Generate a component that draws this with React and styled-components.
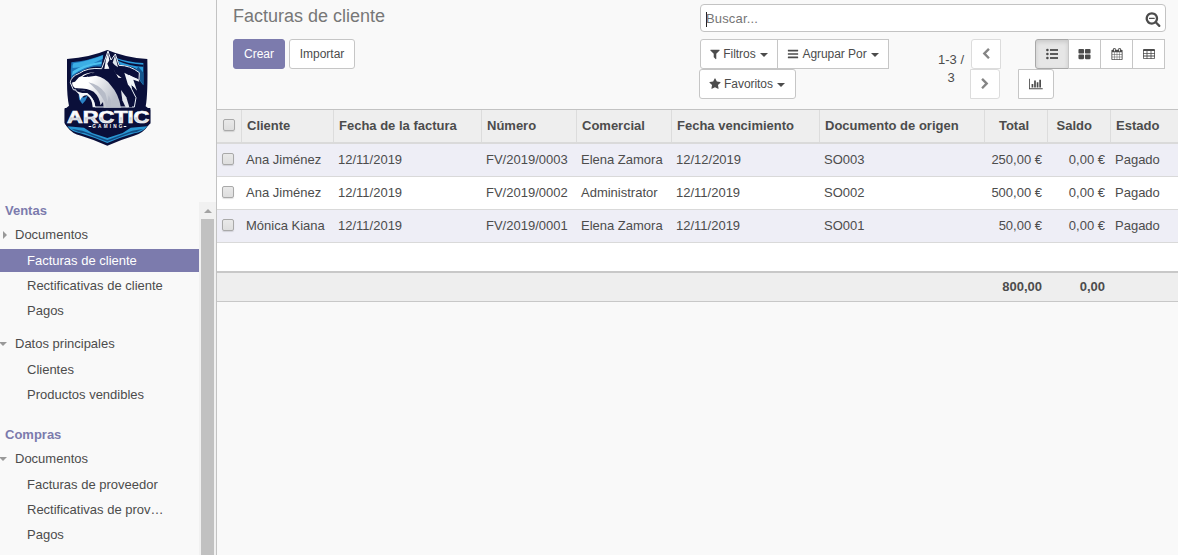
import React from "react";
import styled, { createGlobalStyle, css } from "styled-components";

const Global = createGlobalStyle`
  * { box-sizing: border-box; }
  body {
    margin: 0;
    overflow: hidden;
    background: #f9f9f9;
    color: #4c4c4c;
    font: 13px/18px "Liberation Sans", Arial, sans-serif;
  }
`;

const Page = styled.div`
  display: flex;
  width: 1178px;
  height: 555px;
`;

/* ---------- sidebar ---------- */
const Sidebar = styled.aside`
  display: flex;
  flex-direction: column;
  width: 217px;
  flex: none;
  border-right: 1px solid #c3c3c3;
`;
const LogoArea = styled.div`
  height: 202px;
  flex: none;
  padding: 48px 0 0 62px;
`;
const MenuArea = styled.div`
  display: flex;
  flex: 1;
  min-height: 0;
  overflow: hidden;
`;
const Menu = styled.nav`
  width: 199px;
  flex: none;
`;
const Section = styled.div`
  height: 17px;
  padding-left: 5px;
  margin-top: ${(p) => p.$top}px;
  line-height: 17px;
  font-weight: bold;
  color: #7c7bad;
`;
const Group = styled.div`
  position: relative;
  height: 19px;
  line-height: 19px;
  padding-left: 15px;
  margin: ${(p) => p.$top}px 0 5px;
`;
const Arrow = styled.i`
  position: absolute;
  ${(p) =>
    p.$open
      ? css`
          left: -1px;
          top: 8px;
          border: 4px solid transparent;
          border-top-color: #999;
          border-bottom: 0;
        `
      : css`
          left: 3px;
          top: 6px;
          border: 4px solid transparent;
          border-left-color: #999;
          border-right: 0;
        `}
`;
const Item = styled.div`
  height: 23px;
  margin-bottom: 2px;
  padding-left: 27px;
  line-height: 23px;
  white-space: nowrap;
  ${(p) => p.$active && css`background: #7c7bad; color: #fff;`}
`;
const Scrollbar = styled.div`
  display: flex;
  flex-direction: column;
  align-items: center;
  width: 17px;
  background: #f1f1f1;
`;
const ScrollUp = styled.i`
  margin: 7px 0 6px;
  border: 4px solid transparent;
  border-bottom-color: #a3a3a3;
  border-top: 0;
`;
const Thumb = styled.div`
  width: 13px;
  flex: 1;
  background: #c1c1c1;
`;

/* ---------- control panel ---------- */
const Main = styled.main`
  flex: 1;
  min-width: 0;
`;
const Panel = styled.header`
  display: flex;
  height: 110px;
  border-bottom: 1px solid #c3c3c3;
`;
const PanelLeft = styled.div`
  width: 482px;
  padding: 4px 0 0 16px;
`;
const Title = styled.h1`
  height: 24px;
  margin: 0 0 11px;
  font-size: 18px;
  line-height: 24px;
  font-weight: normal;
  color: #777;
`;
const PanelRight = styled.div`
  width: 479px;
  padding: 4px 12px 0 0;
`;
const Search = styled.div`
  display: flex;
  align-items: center;
  height: 28px;
  margin: 0 0 7px 1px;
  padding: 1px 4px 0 5px;
  border: 1px solid #c3c3c3;
  border-radius: 4px;
  background: #fff;
`;
const Cursor = styled.i`
  width: 1px;
  height: 15px;
  margin-top: 1px;
  background: #222;
`;
const Placeholder = styled.span`
  flex: 1;
  margin-left: -1px;
  letter-spacing: 0.15px;
  color: #757575;
`;
const Tools = styled.div`
  display: flex;
`;
const Wrap = styled.div`
  width: ${(p) => p.$w}px;
  margin-left: ${(p) => p.$left || 0}px;
`;
const Line = styled.div`
  display: flex;
  height: 30px;
  gap: ${(p) => p.$gap || 0}px;
  padding-left: ${(p) => p.$left || 0}px;
`;
const Button = styled.button`
  display: flex;
  align-items: center;
  justify-content: center;
  flex: none;
  width: ${(p) => p.$w}px;
  height: 30px;
  margin: 0 0 0 ${(p) => (p.$join ? -1 : 0)}px;
  padding: 0;
  border: 1px solid ${(p) => (p.$soft ? "#dcdcdc" : "#c6c6c6")};
  border-radius: ${(p) => p.$r || "3px"};
  background: #fff;
  color: ${(p) => (p.$soft ? "#858585" : "#4c4c4c")};
  font: 12px "Liberation Sans", Arial, sans-serif;
  ${(p) => p.$primary && css`background: #7c7bad; border-color: #7c7bad; color: #fff;`}
  ${(p) => p.$pressed && css`
    background: #e6e6e6;
    border-color: #a8a8a8;
    box-shadow: inset 0 2px 4px rgba(0, 0, 0, 0.13);
  `}
`;
const Label = styled.span`
  margin: 0 4px 0 ${(p) => p.$gap || 3}px;
  letter-spacing: -0.05px;
`;
const Caret = styled.i`
  margin: 2px ${(p) => p.$right || 0}px 0 0;
  border: 4px solid transparent;
  border-top-color: #4c4c4c;
  border-bottom: 0;
`;
const PagerText = styled.div`
  width: 28px;
  margin: 12px 0 0 47px;
  text-align: center;
  line-height: 18px;
`;

/* ---------- list ---------- */
const Row = styled.div`
  display: grid;
  grid-template-columns: 25px 92px 148px 95px 95px 148px 165px 63px 63px 67px;
  height: 33px;
  line-height: 32px;
  background: ${(p) => (p.$odd ? "#eeeef6" : "#fff")};
  border-bottom: 1px solid #d9d9d9;
`;
const HeadRow = styled(Row)`
  height: 34px;
  line-height: 31px;
  background: #eee;
  border-bottom: 2px solid #dadada;
  font-weight: bold;
`;
const FootRow = styled(Row)`
  height: 31px;
  line-height: 27px;
  background: #eee;
  border-top: 2px solid #c8c8c8;
  border-bottom: 1px solid #c8c8c8;
  font-weight: bold;
`;
const Blank = styled.div`
  height: 28px;
  background: #fff;
`;
const Cell = styled.div`
  padding: 0 6px 0 4px;
  white-space: nowrap;
  text-align: ${(p) => (p.$right ? "right" : "left")};
`;
const HeadCell = styled(Cell)`
  padding: 0 ${(p) => (p.$right ? 18 : 0)}px 0 5px;
  border-right: 1px solid #dcdcdc;
  &:last-child { border-right: 0; }
`;
const Check = styled.span`
  display: block;
  width: 12px;
  height: 12px;
  margin: ${(p) => (p.$head ? "9px 0 0 1px" : "9px 0 0 1px")};
  border: 1px solid #a9a9a9;
  border-radius: 2px;
  background: linear-gradient(#e9e9e9, #dedede);
  box-shadow: 0 1px 1px rgba(0, 0, 0, 0.12);
`;

/* ---------- icons ---------- */
const Glyph = styled.svg`
  display: block;
  flex: none;
  fill: currentColor;
`;
const PATHS = {
  filter:
    "M1595 295q17 41-14 70l-493 493v742q0 42-39 59-13 5-25 5-27 0-45-19l-256-256q-19-19-19-45v-486l-493-493q-31-29-14-70 17-39 59-39h1280q42 0 59 39z",
  bars: "M1664 1344v128q0 26-19 45t-45 19h-1408q-26 0-45-19t-19-45v-128q0-26 19-45t45-19h1408q26 0 45 19t19 45zm0-512v128q0 26-19 45t-45 19h-1408q-26 0-45-19t-19-45v-128q0-26 19-45t45-19h1408q26 0 45 19t19 45zm0-512v128q0 26-19 45t-45 19h-1408q-26 0-45-19t-19-45v-128q0-26 19-45t45-19h1408q26 0 45 19t19 45z",
  star: "M1728 647q0 22-26 48l-363 354 86 500q1 7 1 20 0 21-10.5 35.5t-30.5 14.5q-19 0-40-12l-449-236-449 236q-22 12-40 12-21 0-31.5-14.5t-10.5-35.5q0-6 2-20l86-500-364-354q-25-27-25-48 0-37 56-46l502-73 225-455q19-41 49-41t49 41l225 455 502 73q56 9 56 46z",
  searchMinus:
    "M1088 800v64q0 13-9.5 22.5t-22.5 9.5h-576q-13 0-22.5-9.5t-9.5-22.5v-64q0-13 9.5-22.5t22.5-9.5h576q13 0 22.5 9.5t9.5 22.5zm128 32q0-185-131.5-316.5t-316.5-131.5-316.5 131.5-131.5 316.5 131.5 316.5 316.5 131.5 316.5-131.5 131.5-316.5zm512 832q0 53-37.5 90.5t-90.5 37.5q-54 0-90-38l-343-342q-179 124-399 124-143 0-273.5-55.5t-225-150-150-225-55.5-273.5 55.5-273.5 150-225 225-150 273.5-55.5 273.5 55.5 225 150 150 225 55.5 273.5q0 220-124 399l343 343q37 37 37 90z",
  calendar:
    "M192 1664h288v-288h-288v288zm352 0h320v-288h-320v288zm-352-352h288v-320h-288v320zm352 0h320v-320h-320v320zm-352-384h288v-288h-288v288zm736 736h320v-288h-320v288zm-384-736h320v-288h-320v288zm768 736h288v-288h-288v288zm-384-352h320v-320h-320v320zm-352-864v-288q0-13-9.5-22.5t-22.5-9.5h-64q-13 0-22.5 9.5t-9.5 22.5v288q0 13 9.5 22.5t22.5 9.5h64q13 0 22.5-9.5t9.5-22.5zm736 864h288v-320h-288v320zm-384-384h320v-288h-320v288zm384 0h288v-288h-288v288zm32-480v-288q0-13-9.5-22.5t-22.5-9.5h-64q-13 0-22.5 9.5t-9.5 22.5v288q0 13 9.5 22.5t22.5 9.5h64q13 0 22.5-9.5t9.5-22.5zm384-64v1280q0 52-38 90t-90 38h-1408q-52 0-90-38t-38-90v-1280q0-52 38-90t90-38h128v-96q0-66 47-113t113-47h64q66 0 113 47t47 113v96h384v-96q0-66 47-113t113-47h64q66 0 113 47t47 113v96h128q52 0 90 38t38 90z",
  chart:
    "M640 896v512h-256v-512h256zm384-512v1024h-256v-1024h256zm1024 1152v128h-2048v-1536h128v1408h1920zm-640-896v768h-256v-768h256zm384-384v1152h-256v-1152h256z",
  left: "M1427 301l-531 531 531 531q19 19 19 45t-19 45l-166 166q-19 19-45 19t-45-19l-742-742q-19-19-19-45t19-45l742-742q19-19 45-19t45 19l166 166q19 19 19 45t-19 45z",
  large:
    "M832 1024v384q0 52-38 90t-90 38h-512q-52 0-90-38t-38-90v-384q0-52 38-90t90-38h512q52 0 90 38t38 90zm0-768v384q0 52-38 90t-90 38h-512q-52 0-90-38t-38-90v-384q0-52 38-90t90-38h512q52 0 90 38t38 90zm896 768v384q0 52-38 90t-90 38h-512q-52 0-90-38t-38-90v-384q0-52 38-90t90-38h512q52 0 90 38t38 90zm0-768v384q0 52-38 90t-90 38h-512q-52 0-90-38t-38-90v-384q0-52 38-90t90-38h512q52 0 90 38t38 90z",
};
const Icon = ({ name, size = 12, wide, flip }) => (
  <Glyph
    width={wide ? (size * 8) / 7 : size}
    height={size}
    viewBox={wide ? "0 0 2048 1792" : "0 0 1792 1792"}
    transform={flip ? "scale(-1 1)" : undefined}
  >
    <path d={PATHS[name]} />
  </Glyph>
);
const ListIcon = () => (
  <Glyph width="12" height="12" viewBox="0 0 12 12">
    {[2, 6, 10].map((y) => (
      <g key={y}>
        <circle cx="1.4" cy={y} r="1.3" />
        <rect x="4" y={y - 0.9} width="8" height="1.8" />
      </g>
    ))}
  </Glyph>
);
const TableIcon = () => (
  <Glyph width="12" height="12" viewBox="0 0 12 12">
    <path
      fillRule="evenodd"
      d="M1 1h10q1 0 1 1v8q0 1-1 1H1q-1 0-1-1V2Q0 1 1 1zM.8 3v1.9h2.8V3zm3.6 0v1.9h3.2V3zm4 0v1.9h2.8V3zM.8 5.7v1.9h2.8V5.7zm3.6 0v1.9h3.2V5.7zm4 0v1.9h2.8V5.7zM.8 8.4v1.8h2.8V8.4zm3.6 0v1.8h3.2V8.4zm4 0v1.8h2.8V8.4z"
    />
  </Glyph>
);

const LogoText = styled.text`
  font-family: "Liberation Sans", Arial, sans-serif;
  font-weight: bold;
  font-size: ${(p) => p.$size}px;
`;
const Logo = () => (
  <svg width="92" height="100" viewBox="21 9 276 300">
    <defs>
      <linearGradient id="metal" x1="0" y1="0" x2="0" y2="1">
        <stop offset="0.45" stopColor="#fff" />
        <stop offset="0.55" stopColor="#c4c8d0" />
        <stop offset="1" stopColor="#fff" />
      </linearGradient>
      <linearGradient id="fur" x1="0" y1="0" x2="1" y2="0.4">
        <stop offset="0.4" stopColor="#fff" />
        <stop offset="1" stopColor="#b9bec9" />
      </linearGradient>
    </defs>
    <path d="M157 15Q105 37 36 42V110Q36 155 42 182L29 193V235L36 245Q52 267 78 272 118 284 157 302 197 284 237 272 265 264 279 242L286 233V194L272 184Q279 150 277 42 211 38 157 15Z" fill="#0a0f3a" />
    {/* sky */}
    <path d="M145 29Q100 47 49 52 46 76 48 101 60 84 82 78 106 61 139 65Z" fill="#1d74b8" />
    <path d="M144 31Q101 48 55 55 52 62 53 69 95 67 143 41Z" fill="#3caee4" />
    <path d="M53 79Q82 58 140 50L139 57Q90 62 51 91Z" fill="#4cc0ee" />
    <path d="M182 38Q218 51 265 54L265 121 255 107 256 82Q245 67 213 62L195 59Z" fill="#2a9bdb" />
    <path d="M190 48Q224 64 265 65V59Q219 57 184 42Z" fill="#0a0f3a" />
    <path d="M215 63L222 76 233 66 242 75 250 65 266 84V121L255 105 253 83Z" fill="#15568f" />
    <path d="M71 147L86 158 99 151 91 167 82 177 72 163Z" fill="#2b82c5" />
    {/* head outline */}
    <path d="M46 113Q48 94 73 85 97 67 140 71L148 50 159 18 168 45 181 27 192 61Q225 61 253 83L252 106Q236 100 222 91L236 124 220 113 243 158 238 186H120Q115 151 88 138L55 134Z" fill="#0a0f3a" stroke="#e9f1f8" strokeWidth="3" />
    {/* muzzle, face and neck */}
    <path d="M51 113Q55 102 79 94 96 81 119 83 106 84 97 96L123 92Q151 98 166 119 191 146 198 188H146L144 171 136 181Q135 157 116 140 97 129 60 130L53 122Z" fill="url(#fur)" />
    <path d="M48 108Q56 98 76 90L69 100 60 110 48 113Z" fill="#0a0f3a" />
    <path d="M82 96Q96 85 117 82L107 91 94 96Z" fill="#0a0f3a" />
    <path d="M100 112Q132 118 151 145L158 171 161 151 169 168 167 187H154L149 170Q129 135 100 112Z" fill="#b7bcc8" />
    <path d="M61 130Q80 139 101 136 131 151 133 184 109 151 87 146L70 143Z" fill="#0a0f3a" />
    <path d="M58 134Q75 146 97 144 118 159 121 187H113Q111 160 96 151 81 151 76 166L72 148Z" fill="#f4f7fa" />
    {/* ears */}
    <path d="M148 72L153 43 159 25 163 46 157 56 163 71Z" fill="#f5f7fa" />
    <path d="M173 53L180 31 189 67 179 60Z" fill="#dfe5ec" />
    <path d="M173 68L183 86 200 99 190 98Z" fill="#fff" />
    {/* back fur */}
    <path d="M203 70Q229 72 247 87L248 95 230 85 209 80Z" fill="#0a0f3a" />
    <path d="M208 83L222 91 249 102 253 110 235 104 246 137 229 118 231 132 219 119Z" fill="#f1f5f9" />
    <path d="M198 112L215 124 239 158 232 154 231 187H219L215 159Z" fill="#0a0f3a" />
    <path d="M198 135L214 157 223 187H212L202 166Z" fill="#e1e5eb" />
    {/* banner and lower rim */}
    <path d="M29 189H286V235L278 243H35L29 234Z" fill="#0a0f3a" />
    <path d="M37 244L87 248 111 264 157 279 203 264 227 248 277 244Q263 262 238 265 197 277 157 294 116 277 76 265 50 261 37 244Z" fill="#2996d3" />
    <path d="M49 251Q69 263 88 264L157 290 226 264Q246 263 266 251L232 257 157 285 82 257Z" fill="#134b82" />
    <LogoText x="36" y="233" $size={48} textLength="247" lengthAdjust="spacingAndGlyphs" fill="url(#metal)" stroke="#f5f7fa" strokeWidth="2">ARCTIC</LogoText>
    <LogoText x="112" y="250" $size={14} textLength="90" lengthAdjust="spacing" fill="#fff">GAMING</LogoText>
    <path d="M101 243h8v3h-8zM206 243h8v3h-8z" fill="#fff" />
  </svg>
);

const HEAD = ["Cliente", "Fecha de la factura", "Número", "Comercial", "Fecha vencimiento", "Documento de origen", "Total", "Saldo", "Estado"];
const ROWS = [
  ["Ana Jiménez", "12/11/2019", "FV/2019/0003", "Elena Zamora", "12/12/2019", "SO003", "250,00 €", "0,00 €", "Pagado"],
  ["Ana Jiménez", "12/11/2019", "FV/2019/0002", "Administrator", "12/11/2019", "SO002", "500,00 €", "0,00 €", "Pagado"],
  ["Mónica Kiana", "12/11/2019", "FV/2019/0001", "Elena Zamora", "12/11/2019", "SO001", "50,00 €", "0,00 €", "Pagado"],
];
const isAmount = (i) => i === 6 || i === 7;

export default function App() {
  return (
    <Page>
      <Global />
      <Sidebar>
        <LogoArea><Logo /></LogoArea>
        <MenuArea>
          <Menu>
            <Section $top={0}>Ventas</Section>
            <Group $top={6}><Arrow />Documentos</Group>
            <Item $active>Facturas de cliente</Item>
            <Item>Rectificativas de cliente</Item>
            <Item>Pagos</Item>
            <Group $top={12}><Arrow $open />Datos principales</Group>
            <Item>Clientes</Item>
            <Item>Productos vendibles</Item>
            <Section $top={20}>Compras</Section>
            <Group $top={6}><Arrow $open />Documentos</Group>
            <Item>Facturas de proveedor</Item>
            <Item>Rectificativas de prov…</Item>
            <Item>Pagos</Item>
          </Menu>
          <Scrollbar><ScrollUp /><Thumb /></Scrollbar>
        </MenuArea>
      </Sidebar>
      <Main>
        <Panel>
          <PanelLeft>
            <Title>Facturas de cliente</Title>
            <Line $gap={4}>
              <Button $w={52} $primary>Crear</Button>
              <Button $w={66}>Importar</Button>
            </Line>
          </PanelLeft>
          <PanelRight>
            <Search>
              <Cursor />
              <Placeholder>Buscar...</Placeholder>
              <Icon name="searchMinus" size={16} />
            </Search>
            <Tools>
              <Wrap $w={191}>
                <Line $left={1}>
                  <Button $w={78} $r="3px 0 0 3px"><Icon name="filter" /><Label $gap={2}>Filtros</Label><Caret $right={1} /></Button>
                  <Button $w={112} $join $r="0"><Icon name="bars" /><Label>Agrupar Por</Label><Caret /></Button>
                </Line>
                <Line>
                  <Button $w={97}><Icon name="star" /><Label $gap={3}>Favoritos</Label><Caret $right={1} /></Button>
                </Line>
              </Wrap>
              <PagerText>1-3 / 3</PagerText>
              <Wrap $w={32} $left={5}>
                <Line $left={1}><Button $w={30} $soft $r="3px 0 0 3px"><Icon name="left" /></Button></Line>
                <Line><Button $w={30} $soft $r="0 3px 3px 0"><Icon name="left" flip /></Button></Line>
              </Wrap>
              <Wrap $w={148} $left={16}>
                <Line $left={17}>
                  <Button $w={34} $pressed $r="3px 0 0 3px"><ListIcon /></Button>
                  <Button $w={33} $join $r="0"><Icon name="large" size={13} /></Button>
                  <Button $w={33} $join $r="0"><Icon name="calendar" /></Button>
                  <Button $w={33} $join $r="0"><TableIcon /></Button>
                </Line>
                <Line><Button $w={36} $r="0 3px 3px 0"><Icon name="chart" wide /></Button></Line>
              </Wrap>
            </Tools>
          </PanelRight>
        </Panel>
        <HeadRow>
          <HeadCell><Check $head /></HeadCell>
          {HEAD.map((h, i) => <HeadCell key={h} $right={isAmount(i)}>{h}</HeadCell>)}
        </HeadRow>
        {ROWS.map((r, n) => (
          <Row key={n} $odd={n % 2 === 0}>
            <Cell><Check /></Cell>
            {r.map((v, i) => <Cell key={i} $right={isAmount(i)}>{v}</Cell>)}
          </Row>
        ))}
        <Blank />
        <FootRow>
          {["", "", "", "", "", "", "", "800,00", "0,00", ""].map((v, i) => <Cell key={i} $right>{v}</Cell>)}
        </FootRow>
      </Main>
    </Page>
  );
}
